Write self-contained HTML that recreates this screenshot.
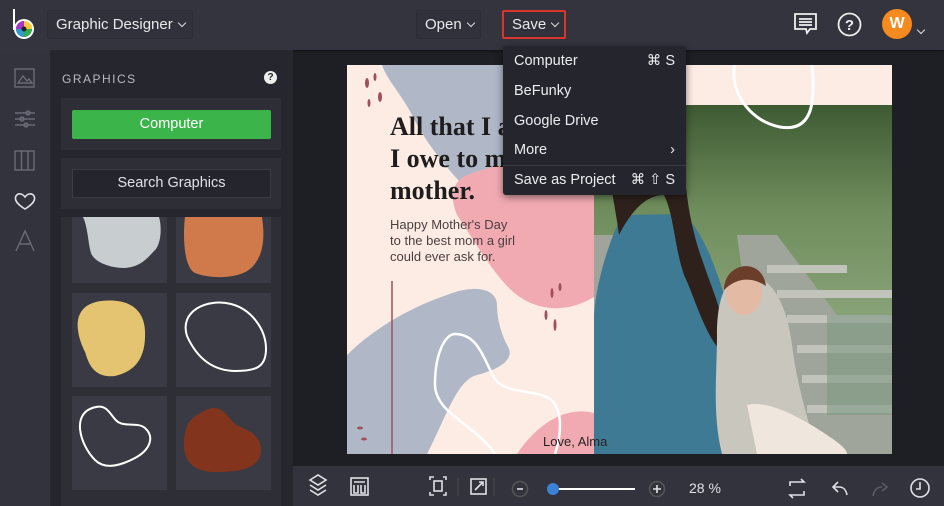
<!DOCTYPE html>
<html><head><meta charset="utf-8"><style>
*{margin:0;padding:0;box-sizing:border-box}
body{width:944px;height:506px;overflow:hidden;background:#1e1f24;font-family:"Liberation Sans",sans-serif;position:relative;color:#e6e6ea}
.a{position:absolute}
.top{left:0;top:0;width:944px;height:50px;background:#33343e;box-shadow:0 1px 3px rgba(0,0,0,.5)}
.btn{position:absolute;top:10px;height:29px;border:1px solid #2b2c35;background:#30313b;font-size:15px;line-height:27px;color:#e8e8ec;padding:0 8px;border-radius:2px;white-space:nowrap}
.chev{display:inline-block;width:6px;height:6px;border-right:1.4px solid #ddd;border-bottom:1.4px solid #ddd;transform:rotate(45deg);margin-left:6px;position:relative;top:-3px}
.icons{left:0;top:50px;width:50px;height:456px;background:#32333c}
.panel{left:50px;top:50px;width:243px;height:456px;background:#26272e}
.tile{position:absolute;width:95px;background:#393a44}
.menu{left:503px;top:46px;width:183px;height:149px;background:#25262d;border-radius:3px;box-shadow:0 2px 8px rgba(0,0,0,.5);font-size:14.5px;color:#ececf0}
.menu div{position:absolute;left:11px}
.menu span{position:absolute;right:11px}
.bot{left:293px;top:466px;width:651px;height:40px;background:#32333c}
</style></head><body>
<div class="a top"></div>
<svg class="a" style="left:11px;top:8px" width="28" height="32" viewBox="0 0 28 32">
<line x1="3" y1="1" x2="3" y2="22" stroke="#fff" stroke-width="2"/>
<circle cx="13" cy="21" r="10" fill="#fff"/>
<circle cx="13" cy="21" r="8" fill="#e63"/>
<path d="M13 21 L13 13 A8 8 0 0 1 21 21Z" fill="#fc3"/>
<path d="M13 21 L21 21 A8 8 0 0 1 13 29Z" fill="#3a5"/>
<path d="M13 21 L13 29 A8 8 0 0 1 5 21Z" fill="#39c"/>
<path d="M13 21 L5 21 A8 8 0 0 1 13 13Z" fill="#a3c"/>
<circle cx="13" cy="21" r="2.5" fill="#222"/>
</svg>
<div class="btn" style="left:47px;width:146px">Graphic Designer<i class="chev"></i></div>
<div class="btn" style="left:416px;width:65px">Open<i class="chev"></i></div>
<div class="btn" style="left:502px;width:64px;border:2px solid #d9352a;line-height:25px">Save<i class="chev"></i></div>
<svg class="a" style="left:793px;top:12px" width="26" height="24" viewBox="0 0 26 24" fill="none" stroke="#eee" stroke-width="1.8"><path d="M2 2h21v15h-6l-3 4-1-4H2z"/><path d="M6 7h13M6 10h13M6 13h13"/></svg>
<svg class="a" style="left:837px;top:12px" width="25" height="25"><circle cx="12.5" cy="12.5" r="11" fill="none" stroke="#eee" stroke-width="1.8"/><text x="12.5" y="18" text-anchor="middle" font-family="Liberation Sans" font-weight="bold" font-size="15" fill="#eee">?</text></svg>
<div class="a" style="left:882px;top:9px;width:30px;height:30px;border-radius:50%;background:#f68a1e;color:#fff;font-weight:bold;font-size:16px;text-align:center;line-height:30px">W</div>
<i class="a chev" style="left:912px;top:20px"></i>

<div class="a icons"></div>
<svg class="a" style="left:14px;top:68px" width="22" height="200" fill="none" stroke="#6a6b76" stroke-width="1.4">
<rect x="1" y="1" width="19" height="18"/><path d="M4 15l5-7 4 5 2-2 3 4z"/>
<path d="M1 45h20M1 51h20M1 57h20"/><circle cx="14" cy="45" r="2"/><circle cx="8" cy="51" r="2"/><circle cx="12" cy="57" r="2"/>
<rect x="1" y="83" width="19" height="19"/><path d="M7.5 83v19M14 83v19"/>
<path d="M11 141c-8-5-11-9-9-13 2-3 6-3 9 1 3-4 7-4 9-1 2 4-1 8-9 13z" stroke="#e0e0e6" stroke-width="1.6"/>
<path d="M2 183l9-20 9 20M5 176h12"/>
</svg>

<div class="a panel"></div>
<div class="a" style="left:62px;top:72px;font-size:12px;letter-spacing:1.5px;color:#b8b9c2">GRAPHICS</div>
<div class="a" style="left:264px;top:71px;width:13px;height:13px;border-radius:50%;background:#eee;color:#26272e;font-size:10px;font-weight:bold;text-align:center;line-height:13px">?</div>
<div class="a" style="left:61px;top:98px;width:220px;height:52px;background:#2d2e36"></div>
<div class="a" style="left:72px;top:110px;width:199px;height:29px;background:#3bb54a;border-radius:2px;text-align:center;line-height:29px;font-size:14.5px;color:#fff">Computer</div>
<div class="a" style="left:61px;top:158px;width:220px;height:51px;background:#2d2e36"></div>
<div class="a" style="left:72px;top:169px;width:199px;height:29px;background:#25262d;border:1px solid #3a3b44;text-align:center;line-height:27px;font-size:14.5px;color:#e0e0e6">Search Graphics</div>
<div class="a" style="left:61px;top:217px;width:220px;height:289px;background:#2d2e36;overflow:hidden">
<div class="tile" style="left:11px;top:-10px;height:76px"></div>
<div class="tile" style="left:115px;top:-10px;height:76px"></div>
<div class="tile" style="left:11px;top:76px;height:94px"></div>
<div class="tile" style="left:115px;top:76px;height:94px"></div>
<div class="tile" style="left:11px;top:179px;height:94px"></div>
<div class="tile" style="left:115px;top:179px;height:94px"></div>
<svg class="a" style="left:0;top:0" width="220" height="289">
<path d="M22 0h76c3 10 2 25-3 32-8 8-14 18-32 19-14 0-30-6-33-15-3-10-3-25-8-36z" fill="#c8cdcf"/>
<path d="M124 0h77c3 20 2 40-12 52-12 10-40 10-55 4-12-6-12-40-10-56z" fill="#d07a4b"/>
<path d="M40 84c25-3 43 6 44 30 1 25-8 40-30 45-25 3-28-20-30-24-10-20-14-47 16-51z" fill="#e4c470"/>
<path d="M170 87c20 5 35 25 35 45 0 18-10 22-30 22-25 0-40-15-49-35-8-25 20-38 44-32z" fill="none" stroke="#fff" stroke-width="2"/>
<path d="M35 190c12-3 15 10 22 15 8 5 20 0 27 6 10 9 5 22-10 30-15 8-30 12-40 2-15-15-25-48 1-53z" fill="none" stroke="#fff" stroke-width="2"/>
<path d="M145 193c15-8 22 8 30 15 12 5 25 10 25 25 0 20-25 22-45 22-22 0-33-10-32-30 1-20 8-25 22-32z" fill="#82351c"/>
<rect x="224" y="190" width="4" height="99" rx="2" fill="#6a6b76" transform="translate(-3,0)"/>
</svg>
</div>

<svg class="a" style="left:347px;top:65px" width="545" height="389" viewBox="0 0 545 389">
<defs>
<linearGradient id="gr" x1="0" y1="0" x2="0" y2="1"><stop offset="0" stop-color="#3d5a33"/><stop offset=".3" stop-color="#6f8d5c"/><stop offset=".6" stop-color="#88a277"/><stop offset="1" stop-color="#6f8a6a"/></linearGradient>
</defs>
<rect width="545" height="389" fill="#fdece3"/>
<path d="M35 0h210v170c-40 20-70 15-100-20-30-30-60-60-80-100C55 30 40 15 35 0z" fill="#b0b8c8"/>
<path d="M120 110c40-15 90-20 120-10 20 6 10 20 10 40v90c-30 20-60 15-80 0-20-15-40-50-60-80-10-25 0-35 10-40z" fill="#f2aab2"/>
<path d="M0 290c30-30 70-50 100-60 30-12 50-5 50 10s5 30 10 40c10 15-10 25-30 30-20 5-30 40-50 79H0z" fill="#b0b8c8"/>
<path d="M170 389c20-30 50-50 80-40v40z" fill="#f2aab2"/>
<path d="M148 389c-20-30-60-40-60-70 0-30 10-50 20-50 25 0 30 30 40 45 10 15 40 10 55 20 15 12 10 40 5 55" fill="none" stroke="#fff" stroke-width="2.5"/>
<line x1="45" y1="216" x2="45" y2="389" stroke="#a0505a" stroke-width="1.5"/>
<g fill="#a0505a"><ellipse cx="20" cy="18" rx="2" ry="5"/><ellipse cx="33" cy="32" rx="2" ry="5"/><ellipse cx="28" cy="12" rx="1.5" ry="4"/><ellipse cx="22" cy="38" rx="1.5" ry="4"/><ellipse cx="205" cy="228" rx="1.5" ry="5"/><ellipse cx="213" cy="222" rx="1.5" ry="4"/><ellipse cx="199" cy="250" rx="1.5" ry="5"/><ellipse cx="208" cy="260" rx="1.5" ry="6"/><ellipse cx="13" cy="363" rx="3" ry="1.5"/><ellipse cx="17" cy="374" rx="3" ry="1.5"/></g>
<g>
<rect x="247" y="40" width="298" height="349" fill="url(#gr)"/>
<path d="M247 170h30v219h-30z" fill="#a0a49a"/>
<path d="M390 170l40 0 60 80 55 0v139H420z" fill="#9fa59a"/>
<path d="M420 200h80v8h-80zM430 225h115v8H430zM440 250h105v8H440zM450 280h95v8H450zM455 310h90v8h-90zM460 340h85v8h-85z" fill="#c2c3bb"/>
<path d="M480 250h65v100h-65z" fill="#7e9a84" opacity=".6"/>
<path d="M275 150c-10 20-25 60-28 100v139h200c-10-30-20-60-40-80-15-20-20-50-30-80-10-30-20-60-40-80z" fill="#3f7a94"/>
<path d="M262 60c5-20 25-28 45-25 25 5 30 25 30 45 0 40 5 80 20 120 10 30 25 60 20 90-20-20-30-60-40-80-10-30-10-60-20-80-20 0-35 20-45 40-5-40-15-70-10-110z" fill="#2e211c"/>
<path d="M282 80c0-15 30-18 40 0 5 25-5 48-18 50-15 0-22-25-22-50z" fill="#d4a38b"/>
<path d="M270 70c10-20 40-25 55-5l0 20c-15-10-35-12-55-5z" fill="#2e211c"/>
<path d="M370 270c0-40 10-60 30-60 25 0 40 30 45 70 5 40 15 70 25 109H375c-10-40-5-80-5-119z" fill="#c8c6bd"/>
<ellipse cx="397" cy="228" rx="18" ry="22" fill="#e3bba5"/>
<path d="M377 225c0-28 38-34 42-4-15-10-30-8-42 4z" fill="#6a3e2a"/>
<path d="M400 340c20-5 50 10 80 30 15 10 20 15 20 19h-90z" fill="#efe6de"/>
</g>
<rect x="247" y="0" width="298" height="40" fill="#fdece3"/>
<path d="M388 0c-6 20 10 55 45 62 35 6 35-30 32-62" fill="none" stroke="#fff" stroke-width="3"/>
<text font-family="Liberation Serif" font-weight="bold" font-size="26" fill="#1e1c1c"><tspan x="43" y="70">All that I am,</tspan><tspan x="43" y="102">I owe to my</tspan><tspan x="43" y="134">mother.</tspan></text>
<text font-family="Liberation Sans" font-size="13" fill="#4a4040"><tspan x="43" y="164">Happy Mother's Day</tspan><tspan x="43" y="180">to the best mom a girl</tspan><tspan x="43" y="196">could ever ask for.</tspan></text>
<text x="196" y="381" font-family="Liberation Sans" font-size="13" fill="#2a2222">Love, Alma</text>
</svg>

<div class="a menu">
<div style="top:7px">Computer</div><span style="top:7px">⌘ S</span>
<div style="top:37px">BeFunky</div>
<div style="top:67px">Google Drive</div>
<div style="top:96px">More</div><span style="top:96px">›</span>
<p style="position:absolute;left:0;top:119px;width:183px;border-top:1px solid #3a3b44"></p>
<div style="top:126px">Save as Project</div><span style="top:126px">⌘ ⇧ S</span>
</div>

<div class="a bot"></div>
<svg class="a" style="left:293px;top:466px" width="651" height="40" fill="none" stroke="#e0e0e6" stroke-width="1.6">
<path d="M17 14l8-5 8 5-8 5zM17 19l8 5 8-5M17 24l8 5 8-5"/>
<rect x="58" y="12" width="17" height="17"/><path d="M61 16h11M61 19v8h4v-8M68 19v8h4v-8"/>
<path d="M137 14v-3h4M150 11h3v3M153 26v3h-3M141 29h-4v-3"/><rect x="141" y="15" width="8" height="10"/>
<line x1="165" y1="12" x2="165" y2="30" stroke="#444"/>
<rect x="178" y="13" width="15" height="15"/><path d="M182 24l8-8M186 16h4v4"/>
<line x1="201" y1="12" x2="201" y2="30" stroke="#444"/>
<circle cx="227" cy="23" r="7.5" stroke="#555"/><path d="M224 23h6"/>
<line x1="258" y1="23" x2="342" y2="23" stroke="#fff" stroke-width="2"/>
<circle cx="260" cy="23" r="6" fill="#3b82d6" stroke="none"/>
<circle cx="364" cy="23" r="7.5" stroke="#555"/><path d="M360 23h8M364 19v8"/>
<path d="M497 20v-4h14l-3-3M511 25v4h-14l3 3"/>
<path d="M545 16l-5 5 5 5M540 21h6c5 0 7 3 8 8"/>
<path d="M580 30c1-6 4-9 9-9M589 17l5 4-5 4" stroke="#5a5b66"/>
<circle cx="627" cy="22" r="9"/><path d="M627 16v7h-4"/>
</svg>
<div class="a" style="left:689px;top:480px;font-size:14px;color:#e0e0e6">28 %</div>
</body></html>
